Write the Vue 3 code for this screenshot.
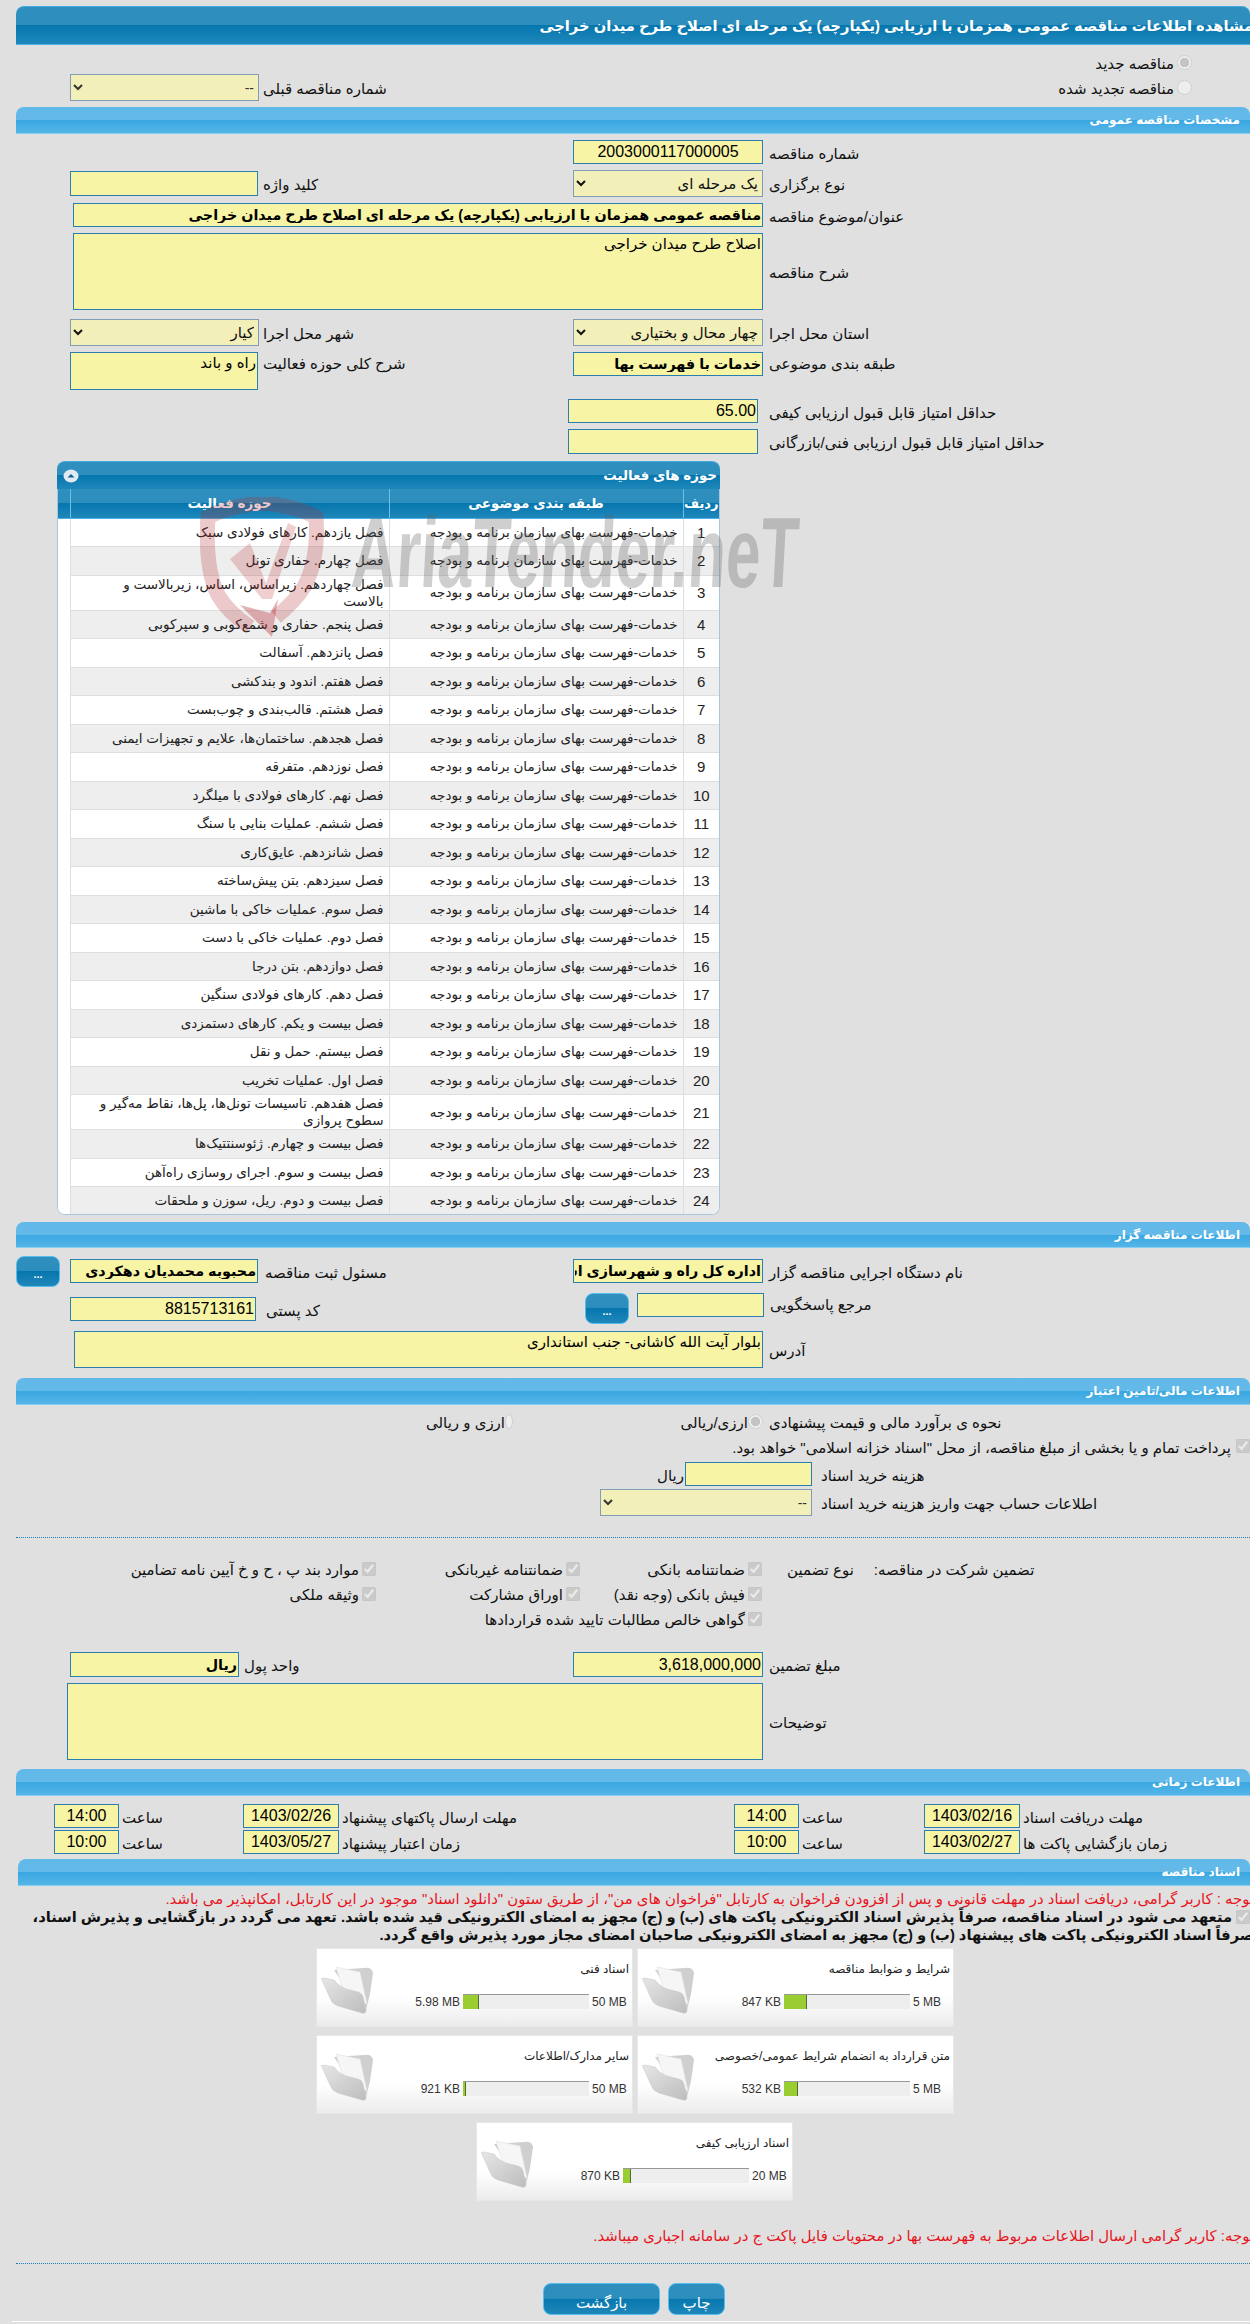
<script setup>
const activities = [
  'فصل یازدهم. کارهای فولادی سبک',
  'فصل چهارم. حفاری تونل',
  'فصل چهاردهم. زیراساس، اساس، زیربالاست  و بالاست',
  'فصل پنجم. حفاری و شمع‌کوبی و سپرکوبی',
  'فصل پانزدهم. آسفالت',
  'فصل هفتم. اندود و بندکشی',
  'فصل هشتم. قالب‌بندی و چوب‌بست',
  'فصل هجدهم. ساختمان‌ها، علایم و تجهیزات ایمنی',
  'فصل نوزدهم. متفرقه',
  'فصل نهم. کارهای فولادی با میلگرد',
  'فصل ششم. عملیات بنایی با سنگ',
  'فصل شانزدهم. عایق‌کاری',
  'فصل سیزدهم. بتن پیش‌ساخته',
  'فصل سوم. عملیات خاکی با ماشین',
  'فصل دوم. عملیات خاکی با دست',
  'فصل دوازدهم. بتن درجا',
  'فصل دهم. کارهای فولادی سنگین',
  'فصل بیست و یکم. کارهای دستمزدی',
  'فصل بیستم. حمل و نقل',
  'فصل اول. عملیات تخریب',
  'فصل هفدهم. تاسیسات تونل‌ها، پل‌ها، نقاط مه‌گیر و سطوح پروازی',
  'فصل بیست و چهارم. ژئوسنتتیک‌ها',
  'فصل بیست و سوم. اجرای روسازی راه‌آهن',
  'فصل بیست و دوم. ریل، سوزن و ملحقات'
]
const topic = 'خدمات-فهرست بهای سازمان برنامه و بودجه'
const docs = [
  [
    { title: 'اسناد فنی', used: '5.98 MB', max: '50 MB', fill: 16 },
    { title: 'شرایط و ضوابط مناقصه', used: '847 KB', max: '5 MB', fill: 23 }
  ],
  [
    { title: 'سایر مدارک/اطلاعات', used: '921 KB', max: '50 MB', fill: 3 },
    { title: 'متن قرارداد به انضمام شرایط عمومی/خصوصی', used: '532 KB', max: '5 MB', fill: 14 }
  ],
  [
    { title: 'اسناد ارزیابی کیفی', used: '870 KB', max: '20 MB', fill: 8 }
  ]
]
</script>

<template>
  <div class="page">
    <div class="bar title-bar"><span>مشاهده اطلاعات مناقصه عمومی همزمان با ارزیابی (یکپارچه) یک مرحله ای اصلاح طرح میدان خراجی</span></div>

    <div class="row radio-top">
      <label class="radio-line"><input type="radio" checked disabled name="t" /><span>مناقصه جدید</span></label>
    </div>
    <div class="row between prev-row">
      <div class="pair">
        <select class="w189 sel" disabled dir="rtl"><option>--</option></select>
        <span class="lbl gap4">شماره مناقصه قبلی</span>
      </div>
      <label class="radio-line"><input type="radio" disabled name="t" /><span>مناقصه تجدید شده</span></label>
    </div>

    <div class="bar sec-bar m6"><span>مشخصات مناقصه عمومی</span></div>

    <div class="form">
      <div class="row m6 cols">
        <div class="cl"></div>
        <div class="cr"><input class="inp w190 h24 ltrnum center" dir="rtl" readonly value="2003000117000005" /><span class="lbl">شماره مناقصه</span></div>
      </div>
      <div class="row m6 cols h27">
        <div class="cl"><input class="inp w188 h25" readonly /><span class="lbl gap5">کلید واژه</span></div>
        <div class="cr"><select class="w190 sel big" disabled dir="rtl"><option>یک مرحله ای</option></select><span class="lbl">نوع برگزاری</span></div>
      </div>
      <div class="row m6 wide">
        <input class="inp full h24 strong" dir="rtl" readonly value="مناقصه عمومی همزمان با ارزیابی (یکپارچه) یک مرحله ای اصلاح طرح میدان خراجی" />
        <span class="lbl">عنوان/موضوع مناقصه</span>
      </div>
      <div class="row m6 wide">
        <textarea class="inp full h77 area" dir="rtl" readonly>اصلاح طرح میدان خراجی</textarea>
        <span class="lbl">شرح مناقصه</span>
      </div>
      <div class="row m9 cols h27">
        <div class="cl"><select class="w189 sel big" disabled dir="rtl"><option>کیار</option></select><span class="lbl gap4">شهر محل اجرا</span></div>
        <div class="cr"><select class="w190 sel big" disabled dir="rtl"><option>چهار محال و بختیاری</option></select><span class="lbl">استان محل اجرا</span></div>
      </div>
      <div class="row m6 cols top h38">
        <div class="cl"><textarea class="inp w188 h38 area" dir="rtl" readonly>راه و باند</textarea><span class="lbl gap5">شرح کلی حوزه فعالیت</span></div>
        <div class="cr"><input class="inp w190 h24 strong" dir="rtl" readonly value="خدمات با فهرست بها" /><span class="lbl">طبقه بندی موضوعی</span></div>
      </div>
      <div class="row m9 cols">
        <div class="cl"></div>
        <div class="cr score"><input class="inp w190 h24 ltrnum" dir="rtl" readonly value="65.00" /><span class="lbl gap11">حداقل امتیاز قابل قبول ارزیابی کیفی</span></div>
      </div>
      <div class="row m6 cols">
        <div class="cl"></div>
        <div class="cr score"><input class="inp w190 h25" readonly /><span class="lbl gap11">حداقل امتیاز قابل قبول ارزیابی فنی/بازرگانی</span></div>
      </div>
    </div>

    <div class="panel">
      <div class="panel-head">
        <span class="toggle"><svg width="16" height="14" viewBox="0 0 16 14"><ellipse cx="8" cy="7" rx="7.5" ry="6.5" fill="#dfeaf3" /><path d="M4.5 8.5 8 5l3.5 3.5z" fill="#14628f" /></svg></span>
        <span>حوزه های فعالیت</span>
      </div>
      <div class="table-clip">
        <table dir="rtl">
          <colgroup><col class="c1" /><col class="c2" /><col class="c3" /><col class="c4" /></colgroup>
          <thead>
            <tr><th>ردیف</th><th>طبقه بندی موضوعی</th><th>حوزه فعالیت</th><th></th></tr>
          </thead>
          <tbody>
            <tr v-for="(a, i) in activities" :key="i" :class="{ alt: i % 2 === 1, tall: i === 2 || i === 20 }">
              <td class="num">{{ i + 1 }}</td>
              <td>{{ topic }}</td>
              <td class="act">{{ a }}</td>
              <td class="blank"></td>
            </tr>
          </tbody>
        </table>
      </div>
      <div class="mark">
        <svg class="shield" width="125" height="140" viewBox="0 0 125 140">
          <path d="M62 6C40 8 22 12 8 20c-2 30 0 58 10 78 8 14 20 24 32 32" fill="none" stroke="#b4262b" stroke-opacity=".25" stroke-width="15" />
          <path d="M62 6c22 2 40 6 54 14 2 30-2 52-12 70-6 10-16 20-28 30" fill="none" stroke="#b4262b" stroke-opacity=".25" stroke-width="15" />
          <path d="M30 62l20-16 16 40 22-60 8 4-24 72h-10z" fill="#b4262b" fill-opacity=".22" />
          <path d="M40 108l30 8 8-14-6 38z" fill="#b4262b" fill-opacity=".35" />
        </svg>
        <span class="mark-text">AriaTender.neT</span>
      </div>
    </div>

    <div class="bar sec-bar m7 b26"><span>اطلاعات مناقصه گزار</span></div>
    <div class="form">
      <div class="row m8 cols-b h30">
        <div class="cl-b"><button class="btn dots" type="button">...</button><input class="inp w188 h24 strong m-l10" dir="rtl" readonly value="محبوبه محمدیان دهکردی" /><span class="lbl gap7">مسئول ثبت مناقصه</span></div>
        <div class="cr"><input class="inp w190 h24 strong" dir="rtl" readonly value="اداره کل راه و شهرسازی استان چهار محال و بختیاری" /><span class="lbl">نام دستگاه اجرایی مناقصه گزار</span></div>
      </div>
      <div class="row m7 cols-c">
        <div class="cl"><input class="inp w186 h24 ltrnum" dir="rtl" readonly value="8815713161" /><span class="lbl gap10">کد پستی</span></div>
        <div class="cr2"><button class="btn dots" type="button">...</button><input class="inp w127 h24 m-l8" readonly /><span class="lbl">مرجع پاسخگویی</span></div>
      </div>
      <div class="row m7 wide addr">
        <textarea class="inp full h37 area" dir="rtl" readonly>بلوار آیت الله کاشانی- جنب استانداری</textarea>
        <span class="lbl">آدرس</span>
      </div>
    </div>

    <div class="bar sec-bar m10"><span>اطلاعات مالی/تامین اعتبار</span></div>
    <div class="form">
      <div class="row m6 fin-radio">
        <div class="end c93"><span class="lbl">ارزی و ریالی</span><input class="mini-gap" type="radio" disabled name="c" /></div>
        <div class="end c250"><span class="lbl">ارزی/ریالی</span><input class="mini-gap" type="radio" checked disabled name="c" /></div>
        <span class="lbl">نحوه ی برآورد مالی و قیمت پیشنهادی</span>
      </div>
      <div class="row m5 pay">
        <input type="checkbox" checked disabled />
        <span class="lbl">پرداخت تمام و یا بخشی از مبلغ مناقصه، از محل "اسناد خزانه اسلامی" خواهد بود.</span>
      </div>
      <div class="row m6 fee">
        <div class="end c812"><span class="lbl rial">ریال</span><input class="inp w127 h24" readonly /></div>
        <span class="lbl gap9">هزینه خرید اسناد</span>
      </div>
      <div class="row m3 fee">
        <div class="end c812"><select class="w225 sel" disabled dir="rtl"><option>--</option></select></div>
        <span class="lbl gap9">اطلاعات حساب جهت واریز هزینه خرید اسناد</span>
      </div>
    </div>

    <div class="dash d1"></div>

    <div class="guarantee">
      <label class="chk"><input type="checkbox" checked disabled /><span>ضمانتنامه بانکی</span></label>
      <label class="chk g2"><input type="checkbox" checked disabled /><span>ضمانتنامه غیربانکی</span></label>
      <label class="chk g1"><input type="checkbox" checked disabled /><span>موارد بند پ ، ح و خ آیین نامه تضامین</span></label>
      <div class="g-head"><span class="lbl">نوع تضمین</span><span class="lbl">تضمین شرکت در مناقصه:</span></div>
      <label class="chk g3r2"><input type="checkbox" checked disabled /><span>فیش بانکی (وجه نقد)</span></label>
      <label class="chk g2r2"><input type="checkbox" checked disabled /><span>اوراق مشارکت</span></label>
      <label class="chk g1r2"><input type="checkbox" checked disabled /><span>وثیقه ملکی</span></label>
      <label class="chk g3r3"><input type="checkbox" checked disabled /><span>گواهی خالص مطالبات تایید شده قراردادها</span></label>
    </div>

    <div class="form">
      <div class="row m21 cols">
        <div class="cl"><input class="inp w169 h25 strong" dir="rtl" readonly value="ریال" /><span class="lbl gap5">واحد پول</span></div>
        <div class="cr"><input class="inp w190 h25 ltrnum" dir="rtl" readonly value="3,618,000,000" /><span class="lbl">مبلغ تضمین</span></div>
      </div>
      <div class="row m6 wide desc">
        <textarea class="inp desc-area h77" dir="rtl" readonly></textarea>
        <span class="lbl">توضیحات</span>
      </div>
    </div>

    <div class="bar sec-bar m9"><span>اطلاعات زمانی</span></div>
    <div class="times">
      <input class="inp tm ltrnum" readonly value="14:00" /><span class="lbl t-lbl">ساعت</span>
      <input class="inp dt ltrnum" readonly value="1403/02/26" /><span class="lbl t-lbl">مهلت ارسال پاکتهای پیشنهاد</span>
      <input class="inp tm ltrnum" readonly value="14:00" /><span class="lbl t-lbl">ساعت</span>
      <input class="inp dt ltrnum" readonly value="1403/02/16" /><span class="lbl t-lbl">مهلت دریافت اسناد</span>
      <input class="inp tm ltrnum" readonly value="10:00" /><span class="lbl t-lbl">ساعت</span>
      <input class="inp dt ltrnum" readonly value="1403/05/27" /><span class="lbl t-lbl">زمان اعتبار پیشنهاد</span>
      <input class="inp tm ltrnum" readonly value="10:00" /><span class="lbl t-lbl">ساعت</span>
      <input class="inp dt ltrnum" readonly value="1403/02/27" /><span class="lbl t-lbl">زمان بازگشایی پاکت ها</span>
    </div>

    <div class="bar sec-bar docs-bar"><span>اسناد مناقصه</span></div>
    <div class="note red first">توجه : کاربر گرامی، دریافت اسناد در مهلت قانونی و پس از افزودن فراخوان به کارتابل "فراخوان های من"، از طریق ستون "دانلود اسناد" موجود در این کارتابل، امکانپذیر می باشد.</div>
    <div class="commit l1"><input type="checkbox" checked disabled /><b>متعهد می شود در اسناد مناقصه، صرفاً پذیرش اسناد الکترونیکی پاکت های (ب) و (ج) مجهز به امضای الکترونیکی قید شده باشد. تعهد می گردد در بازگشایی و پذیرش اسناد،</b></div>
    <div class="commit l2"><b>صرفاً اسناد الکترونیکی پاکت های پیشنهاد (ب) و (ج) مجهز به امضای الکترونیکی صاحبان امضای مجاز مورد پذیرش واقع گردد.</b></div>

    <div class="cards">
      <div v-for="(r, ri) in docs" :key="ri" class="card-row" :class="{ single: r.length === 1 }">
        <div v-for="d in r" :key="d.title" class="card">
          <svg class="folder" width="54" height="50" viewBox="0 0 54 50">
            <defs>
              <linearGradient id="fg" x1="0" y1="0" x2="1" y2="1"><stop offset="0" stop-color="#e6e6e6" /><stop offset="1" stop-color="#bdbdbd" /></linearGradient>
            </defs>
            <path d="M14 6 L44 4 Q52 3 53 9 L50 30 L46 46 L38 42 Z" fill="#cfcfcf" />
            <path d="M16 3 L40 8 L47 40 L24 30 Z" fill="#f6f6f6" stroke="#e2e2e2" stroke-width=".6" />
            <path d="M2 16 Q0 14 4 14 L14 16 Q20 24 30 26 L38 28 Q42 29 43 33 L46 46 Q46 50 42 49 L18 42 Q12 40 10 34 Z" fill="url(#fg)" stroke="#c6c6c6" stroke-width=".5" />
          </svg>
          <div class="card-body">
            <div class="card-title">{{ d.title }}</div>
            <div class="prog">
              <span class="used">{{ d.used }}</span>
              <span class="track"><i class="fill" :style="{ width: d.fill + 'px' }"></i></span>
              <span class="max">{{ d.max }}</span>
            </div>
          </div>
        </div>
      </div>
    </div>

    <div class="note red second">توجه: کاربر گرامی ارسال اطلاعات مربوط به فهرست بها در محتویات فایل پاکت ج در سامانه اجباری میباشد.</div>
    <div class="dash d2"></div>
    <div class="actions">
      <button class="btn back" type="button">بازگشت</button>
      <button class="btn print" type="button">چاپ</button>
    </div>
    <div class="foot"></div>
  </div>
</template>

<style>
html, body { margin: 0; background: #e0e0e0; }
</style>

<style scoped>
.page {
  width: 1250px; height: 2324px; overflow: hidden; background: #e0e0e0; padding-top: 6px; box-sizing: border-box;
  font-family: "Liberation Sans", "DejaVu Sans", sans-serif; font-size: 15px; color: #111;
}
.bar { margin-left: 16px; width: 1234px; box-sizing: border-box; border-radius: 8px 8px 0 0; white-space: nowrap; display: flex; justify-content: flex-end; overflow: hidden; direction: rtl; }
.bar span { color: #fff; font-weight: 700; }
.title-bar {
  height: 39px; align-items: center; margin-bottom: 0;
  background: linear-gradient(#2f90bf 0, #2d8ebd 48%, #0677ae 50%, #1f87ba 100%);
  border-top: 1px solid #45a9dd; border-bottom: 1px solid #4cb0e4;
  justify-content: flex-start; font-size: 14.7px;
}
.title-bar span { margin-right: -3px; }
.sec-bar {
  height: 27px; align-items: center; justify-content: flex-start; font-size: 12px; padding-right: 10px;
  background: linear-gradient(#62b9e9 0, #63bae9 50%, #3aa7e1 52%, #55b5e8 100%);
  border-bottom: 1px solid #86cdf0;
}
.b26 { height: 26px; }
.m3 { margin-top: 3px; } .m5 { margin-top: 5px; } .m6 { margin-top: 6px; } .m7 { margin-top: 7px; } .m8 { margin-top: 8px; } .m9 { margin-top: 9px; } .m10 { margin-top: 10px; } .m21 { margin-top: 21px; }
.row { display: flex; align-items: center; }
.radio-top { height: 24px; padding-top: 5px; justify-content: flex-end; padding-right: 58px; box-sizing: content-box; }
.radio-line { display: flex; align-items: center; gap: 3px; direction: rtl; }
.radio-line span { padding-top: 3px; }
input[type="radio"] {
  appearance: none; border-radius: 50%; border: 1px solid #cfcfcf; background: #eeeeee; box-sizing: border-box; margin: 0;
}
input[type="radio"]:checked { background: radial-gradient(circle, #c4c4c4 0, #c4c4c4 48%, #eeeeee 54%); }
.radio-line input { margin: 0; width: 15px; height: 15px; }
.between { justify-content: space-between; padding: 0 58px 0 70px; }
.prev-row { height: 27px; }
.pair { display: flex; align-items: center; }
.lbl { white-space: nowrap; direction: rtl; margin-left: 6px; text-align: left; padding-top: 3px; }
.gap4 { margin-left: 4px; } .gap5 { margin-left: 5px; } .gap7 { margin-left: 7px; } .gap9 { margin-left: 9px; } .gap10 { margin-left: 10px; } .gap11 { margin-left: 11px; }
.cols { padding-left: 70px; }
.cols-b { padding-left: 16px; align-items: flex-start; }
.cols-c { padding-left: 70px; align-items: flex-start; height: 31px; }
.cl { width: 503px; display: flex; align-items: center; }
.cl-b { width: 557px; display: flex; align-items: center; height: 30px; }
.cr { display: flex; align-items: center; }
.cr2 { display: flex; align-items: flex-start; margin-left: 12px; }
.cols-c .cl { padding-top: 4px; }
.cols-b .cr { height: 30px; }
.h27 { height: 27px; } .h30 { height: 30px; } .h38 { height: 38px; }
.top { align-items: flex-start; }
.top .cl, .top .cr { align-items: flex-start; }
.wide { padding-left: 73px; }
.addr { padding-left: 74px; }
.desc { padding-left: 67px; }
.score { margin-left: -5px; }
.inp {
  display: block; box-sizing: border-box; margin: 0; padding: 0 1px; background: #f7f4a5; border: 1px solid #2a7eb0; border-radius: 0; outline: none; color: #000;
  font-family: "Liberation Sans", "DejaVu Sans", sans-serif; font-size: 15px; resize: none;
}
.strong { font-size: 14.3px; font-weight: 700; }
.ltrnum { font-size: 16px; text-align: right; }
.center { text-align: center; }
.area { font-size: 15px; line-height: 17px; padding-top: 1px; overflow: hidden; }
.sel {
  display: block; box-sizing: border-box; height: 27px; margin: 0; background: #f2efb9; border: 1px solid #7f9db5; border-radius: 0; color: #333; opacity: 1;
  font-family: "Liberation Sans", "DejaVu Sans", sans-serif; font-size: 14px;
}
.big { font-size: 15px; color: #111; }
.w127 { width: 127px; } .w169 { width: 169px; } .w186 { width: 186px; } .w188 { width: 188px; } .w189 { width: 189px; } .w190 { width: 190px; } .w225 { width: 225px; }
.h24 { height: 24px; } .h25 { height: 25px; } .h37 { height: 37px; } .h38 { height: 38px; } .h77 { height: 77px; }
.full { width: 690px; }
.addr .full { width: 689px; }
.desc-area { width: 696px; }
.m-l10 { margin-left: 10px; } .m-l8 { margin-left: 8px; }

.panel { position: relative; margin: 7px 0 0 57px; width: 663px; height: 754px; }
.panel-head {
  height: 28px; box-sizing: border-box; border-radius: 8px 8px 0 0; color: #fff; font-weight: 700; font-size: 13.4px; padding: 0 3px 0 6px;
  display: flex; justify-content: space-between; align-items: center; direction: ltr;
  background: linear-gradient(#2f90bf 0, #2d8ebd 48%, #0677ae 50%, #1f87ba 100%);
  border-top: 1px solid #45a9dd;
}
.toggle { display: flex; }
.table-clip { border: 1px solid #a9c6dd; border-top: 0; border-radius: 0 0 8px 8px; overflow: hidden; box-sizing: border-box; height: 726px; background: #fff; }
table { border-collapse: collapse; table-layout: fixed; width: 661px; }
.c1 { width: 36px; } .c2 { width: 294px; } .c3 { width: 319px; } .c4 { width: 12px; }
thead tr { height: 29px; background: linear-gradient(#2f90bf 0, #2d8ebd 48%, #0677ae 50%, #1f87ba 100%); }
th { color: #fff; font-size: 13.5px; font-weight: 700; border-left: 1px solid #6cbfe8; border-bottom: 1px solid #4cb0e4; padding: 0; white-space: nowrap; }
th:first-child { font-size: 13px; }
th:last-child { border-left: 0; }
tbody tr { height: 28.5px; }
tbody tr.tall { height: 35px; }
tbody tr.alt { background: #eeeeee; }
td { padding: 0 5px 0 3px; font-size: 13.5px; text-align: right; color: #222; border-bottom: 1px solid #dedede; border-left: 1px solid #dedede; line-height: 17px; }
td.act { padding-left: 14px; }
td.num { font-size: 15px; text-align: center; padding: 0; }
td.blank { background: #fff; border-left: 0; padding: 0; border-bottom: 0; }
.mark { position: absolute; left: 0; top: 0; width: 0; height: 0; pointer-events: none; }
.shield { position: absolute; left: 143px; top: 36px; }
.mark-text {
  position: absolute; left: 295px; top: 41px; font: 700 100px/1 "Liberation Sans", sans-serif; color: rgba(95, 95, 95, .3); white-space: nowrap;
  transform-origin: 0 50%; transform: scaleX(.62) skewX(-5deg);
}

.btn {
  border: 1px solid #56bdec; border-radius: 8px; margin: 0; padding: 0; color: #fff; font-size: 15px; font-family: "Liberation Sans", "DejaVu Sans", sans-serif;
  background: linear-gradient(#2f90bf 0, #2d8ebd 48%, #0677ae 50%, #1f87ba 100%);
}
.dots { width: 44px; height: 31px; font-weight: 700; font-size: 11px; flex: none; padding-top: 6px; line-height: 1; }

.fin-radio { height: 20px; padding-left: 420px; }
.end { display: flex; justify-content: flex-end; align-items: center; }
.c93 { width: 93px; } .c250 { width: 250px; }
.mini-gap { margin: 0 0 4px 7px; width: 15px; height: 15px; }
.pay { height: 20px; justify-content: flex-end; }
.pay input { margin: 0; order: 2; width: 14px; height: 14px; }
.pay .lbl { margin: 0; order: 1; padding-right: 5px; }
.fee { padding-left: 600px; }
.c812 { width: 212px; }
.rial { margin: 0 1px 0 0; }
.dash { margin-left: 16px; border-top: 1px dotted #1b7db5; height: 0; }
.d1 { margin-top: 21px; }
.d2 { margin-top: 18px; }

.guarantee { display: grid; margin-top: 18px; padding-left: 100px; height: 75px; grid-template-columns: 276px 204px 182px auto; grid-auto-rows: 25px; }
.chk { display: flex; align-items: center; direction: rtl; gap: 3px; white-space: nowrap; }
.chk span { padding-top: 3px; }
.chk input { margin: 0; width: 14px; height: 14px; }
.g-head { display: flex; align-items: center; gap: 20px; padding-left: 25px; }
.g-head .lbl { margin: 0; }
.g3r3 { grid-column: 2 / 4; grid-row: 3; }
.g3r2 { grid-column: 3; grid-row: 2; }
.g2r2 { grid-column: 2; grid-row: 2; }
.g1r2 { grid-column: 1; grid-row: 2; }
.chk.g1 { grid-column: 1; grid-row: 1; }
.chk.g2 { grid-column: 2; grid-row: 1; }
.chk:first-child { grid-column: 3; grid-row: 1; }
.g-head { grid-column: 4; grid-row: 1; }

.times { display: grid; margin-top: 8px; padding-left: 54px; grid-template-columns: 65px 124px 96px 395px 65px 125px 96px auto; grid-auto-rows: 24px; row-gap: 2px; align-items: center; }
.tm { width: 65px; height: 24px; text-align: center; }
.dt { width: 96px; height: 24px; text-align: center; font-size: 16px; }
.t-lbl { margin-left: 3px; justify-self: start; }
.docs-bar { margin-left: 18px; width: 1232px; margin-top: 5px; }

.note { white-space: nowrap; direction: rtl; width: 1254px; }
.red { color: #e8141c; font-size: 14.9px; }
.first { height: 20px; line-height: 26px; margin-top: 0; }
.commit { white-space: nowrap; direction: rtl; width: 1254px; font-size: 14.7px; height: 18px; line-height: 18px; display: flex; align-items: center; }
.commit input { margin: 0 0 0 4px; width: 14px; height: 14px; }
.l1 { width: 1250px; margin-top: 2px; }
.cards { margin-top: 4px; padding-left: 316px; }
.card-row { display: flex; gap: 4px; height: 79px; margin-bottom: 8px; }
.card-row.single { margin-left: 160px; margin-bottom: 0; }
.card {
  width: 317px; height: 79px; box-sizing: border-box; display: flex; border: 1px solid #e7e7e7;
  background: linear-gradient(#fff 0, #fff 62%, #ececec 100%); padding: 0;
}
.folder { margin: 15px 0 0 3px; flex: none; }
.card-body { flex: 1; direction: rtl; padding: 13px 2px 0 0; font-size: 12px; }
.card-title { color: #222; white-space: nowrap; height: 20px; padding-right: 1px; }
.prog { direction: ltr; display: flex; justify-content: flex-end; align-items: center; margin-top: 12px; font-family: "Liberation Sans", sans-serif; font-size: 12px; color: #333; }
.track { display: block; width: 126px; height: 15px; background: #eee; border-top: 1px solid #999; box-sizing: border-box; margin: 0 3px 0 3px; }
.fill { display: block; height: 14px; background: #9acd32; border-right: 1px solid #556b2f; box-sizing: border-box; }
.max { width: 38px; white-space: nowrap; }
.second { margin-top: 26px; height: 18px; line-height: 18px; }
.actions { display: flex; margin-top: 19px; padding-left: 543px; gap: 8px; }
.back { width: 117px; height: 32px; padding-top: 7px; }
.print { width: 57px; height: 32px; padding-top: 7px; }
.foot { margin: 6px 0 0 12px; height: 1px; background: #fff; }
</style>
